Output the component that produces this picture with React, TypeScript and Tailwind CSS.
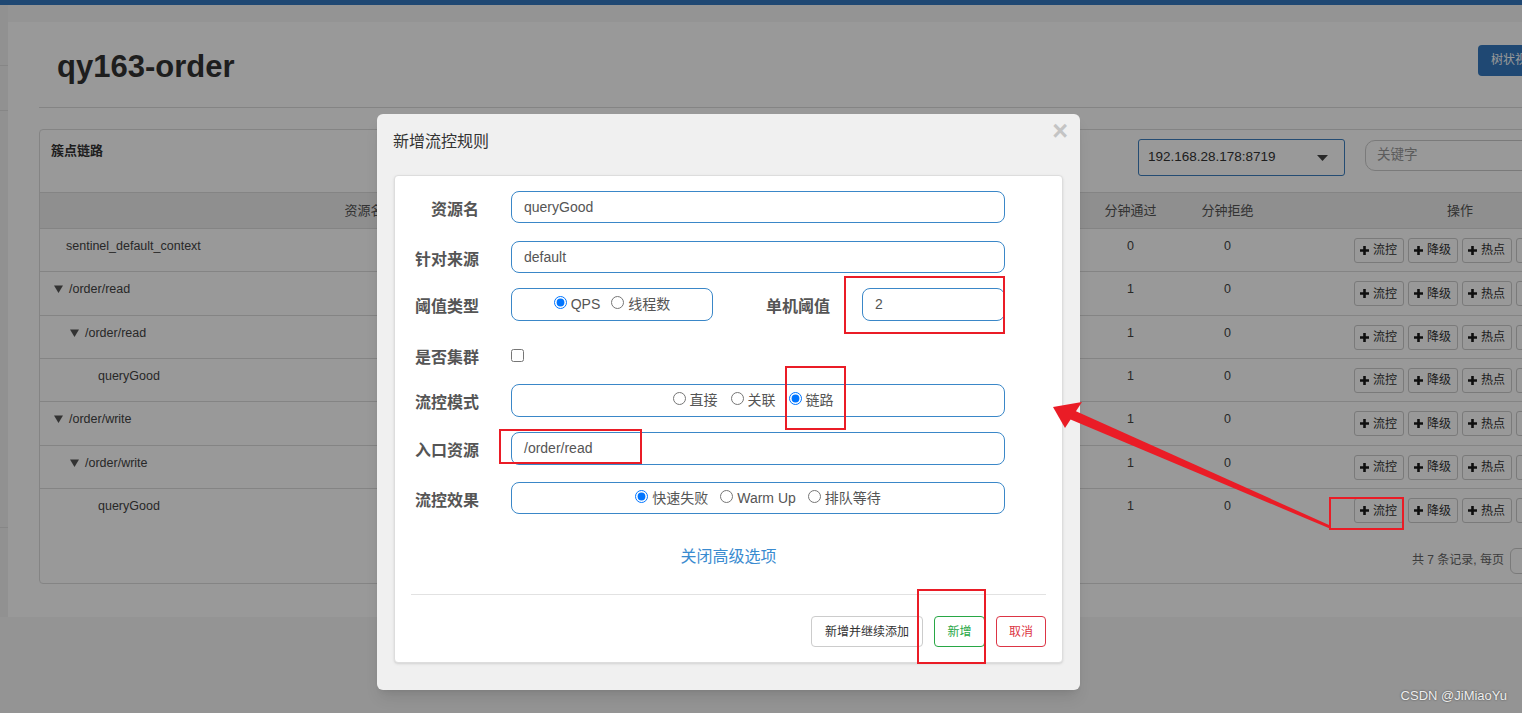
import React from 'react';

type Row = { name: string; level: number; tree: boolean; pass: string; h: string; last?: boolean };

const rows: Row[] = [
  { name: 'sentinel_default_context', level: 0, tree: false, pass: '0', h: 'h-[43px]' },
  { name: '/order/read', level: 0, tree: true, pass: '1', h: 'h-[44px]' },
  { name: '/order/read', level: 1, tree: true, pass: '1', h: 'h-[43px]' },
  { name: 'queryGood', level: 2, tree: false, pass: '1', h: 'h-[43px]' },
  { name: '/order/write', level: 0, tree: true, pass: '1', h: 'h-[44px]' },
  { name: '/order/write', level: 1, tree: true, pass: '1', h: 'h-[43px]' },
  { name: 'queryGood', level: 2, tree: false, pass: '1', h: 'h-[43px]', last: true },
];

const cols = 'grid grid-cols-[648px_98px_99px_98px_99px_97px_97px_368px]';

const Plus = () => (
  <svg width="9" height="9" viewBox="0 0 9 9" className="shrink-0">
    <path d="M3.2 0h2.6v3.2H9v2.6H5.8V9H3.2V5.8H0V3.2h3.2z" fill="#1a1a1a" />
  </svg>
);

const TreeCaret = () => (
  <svg width="9" height="8" viewBox="0 0 9 8" className="mt-[5px] shrink-0">
    <path d="M0 0.5h9L4.5 8z" fill="#555" />
  </svg>
);

function OpButton({ label }: { label: string }) {
  return (
    <div className="flex h-[25px] w-[50px] items-center gap-[4px] rounded-[3px] border border-[#ccc] bg-white pl-[5px] text-[12px] leading-none text-[#333]">
      <Plus />
      <span>{label}</span>
    </div>
  );
}

function Radio({ label, checked }: { label: string; checked?: boolean }) {
  return (
    <label className="flex items-center gap-[4px] whitespace-nowrap">
      <input type="radio" checked={!!checked} readOnly className="m-0 mb-[4px] h-[13px] w-[13px] shrink-0" />
      <span>{label}</span>
    </label>
  );
}

const box = 'flex items-center rounded-[8px] border border-[#3a87c8] text-[14px] text-[#555]';
const label = 'w-[68px] shrink-0 pt-[5px] text-right text-[16px] font-bold text-[#555]';

function PageBehind() {
  return (
    <>
      <div className="h-[5px] bg-[#3479c0]" />
      <div className="flex">
        <aside className="w-[8px] shrink-0 bg-[#f2f2f2]">
          <div className="h-[61px] border-b border-[#e0e0e0]" />
          <div className="h-[45px] border-b border-[#e0e0e0]" />
          <div className="h-[417px] border-b border-[#e0e0e0]" />
        </aside>
        <main className="pt-[17px]">
          <section className="h-[595px] w-[1700px] bg-white pl-[31px]">
            <header className="flex h-[86px] border-b border-[#ddd]">
              <div className="w-[1439px] pl-[18px] pt-[27px]">
                <h1 className="text-[31px] font-bold leading-[36px] text-[#333]">qy163-order</h1>
              </div>
              <div className="mt-[23px] h-[31px] w-[90px] rounded-[4px] bg-[#3479c0] pl-[13px] text-[12px] leading-[31px] text-white">
                树状视图
              </div>
            </header>

            <div className="mt-[21px] h-[455px] w-[1606px] rounded-[4px] border border-[#ddd]">
              <div className="flex h-[63px] border-b border-[#ddd] pl-[11px]">
                <div className="w-[1087px] pt-[11px] text-[13px] font-bold leading-[20px] text-[#333]">簇点链路</div>
                <div className="mt-[9px] flex h-[37px] w-[207px] items-center rounded-[3px] border border-[#3c7fc0] pl-[9px] text-[13.5px] text-[#333]">
                  192.168.28.178:8719
                  <svg width="11" height="6" viewBox="0 0 11 6" className="ml-auto mr-[16px]">
                    <path d="M0 0h11L5.5 6z" fill="#444" />
                  </svg>
                </div>
                <div className="ml-[20px] mt-[10px] flex h-[31px] w-[260px] items-center rounded-[10px] border border-[#ccc] pl-[11px] text-[13.5px] text-[#999]">
                  关键字
                </div>
              </div>

              <div className={`${cols} h-[36px] items-center border-b border-[#ddd] bg-[#eee] text-center text-[13px] text-[#555]`}>
                <div>资源名</div>
                <div>通过QPS</div>
                <div>拒绝QPS</div>
                <div>并发数</div>
                <div>平均RT</div>
                <div>分钟通过</div>
                <div>分钟拒绝</div>
                <div>操作</div>
              </div>

              {rows.map((r, i) => (
                <div
                  key={i}
                  className={`${cols} ${r.h} ${r.last ? '' : 'border-b border-[#ddd]'} text-[12.5px] leading-[18px] text-[#444]`}
                >
                  <div
                    className={`flex gap-[6px] pt-[8px] ${
                      r.tree ? (r.level === 0 ? 'pl-[14px]' : 'pl-[30px]') : r.level === 0 ? 'pl-[26px]' : 'pl-[58px]'
                    }`}
                  >
                    {r.tree && <TreeCaret />}
                    <span>{r.name}</span>
                  </div>
                  {/* QPS / RT columns sit under the dialog */}
                  <div />
                  <div />
                  <div />
                  <div />
                  <div className="pt-[8px] text-center">{r.pass}</div>
                  <div className="pt-[8px] text-center">0</div>
                  <div className="flex items-center justify-center gap-[4px]">
                    <OpButton label="流控" />
                    <OpButton label="降级" />
                    <OpButton label="热点" />
                    <OpButton label="授权" />
                  </div>
                </div>
              ))}

              <div className="flex h-[51px] items-start pl-[1372px]">
                <span className="pt-[19px] text-[12px] leading-[18px] text-[#666]">共 7 条记录, 每页</span>
                <div className="ml-[6px] mt-[16px] h-[26px] w-[60px] rounded-[6px] border border-[#ccc]" />
              </div>
            </div>
          </section>
        </main>
      </div>
    </>
  );
}

function Dialog() {
  return (
    <div className="absolute left-[377px] top-[114px] h-[576px] w-[703px] rounded-[6px] bg-[#f0f0f0] shadow-lg">
      <div className="flex h-[61px] justify-between pl-[16px] pr-[12px]">
        <h3 className="pt-[17px] text-[16px] leading-[22px] text-[#333]">新增流控规则</h3>
        <span className="mt-[4px] text-[27px] font-bold leading-[27px] text-[#c4c4c4]">×</span>
      </div>

      <div className="mx-[17px] h-[488px] rounded-[4px] border border-[#ddd] bg-white px-[16px] pt-[15px] shadow-sm">
        <div className="flex h-[32px] items-center">
          <div className={label}>资源名</div>
          <div className={`${box} ml-[32px] h-[32px] w-[494px] pl-[12px]`}>queryGood</div>
        </div>

        <div className="mt-[18px] flex h-[32px] items-center">
          <div className={label}>针对来源</div>
          <div className={`${box} ml-[32px] h-[32px] w-[494px] pl-[12px]`}>default</div>
        </div>

        <div className="mt-[15px] flex h-[33px] items-center">
          <div className={label}>阈值类型</div>
          <div className={`${box} ml-[32px] h-[33px] w-[202px] justify-center gap-[11px]`}>
            <Radio label="QPS" checked />
            <Radio label="线程数" />
          </div>
          <div className="w-[117px] pt-[5px] text-right text-[16px] font-bold text-[#555]">单机阈值</div>
          <div className={`${box} ml-[32px] h-[33px] w-[143px] pl-[12px]`}>2</div>
        </div>

        <div className="mt-[17px] flex h-[34px] items-center">
          <div className={label}>是否集群</div>
          <input type="checkbox" readOnly className="m-0 ml-[32px] h-[13px] w-[13px]" />
        </div>

        <div className="mt-[12px] flex h-[33px] items-center">
          <div className={label}>流控模式</div>
          <div className={`${box} ml-[32px] h-[33px] w-[494px] justify-center gap-[13px] pr-[10px]`}>
            <Radio label="直接" />
            <Radio label="关联" />
            <Radio label="链路" checked />
          </div>
        </div>

        <div className="mt-[15px] flex h-[33px] items-center">
          <div className={label}>入口资源</div>
          <div className={`${box} ml-[32px] h-[33px] w-[494px] pl-[12px]`}>/order/read</div>
        </div>

        <div className="mt-[17px] flex h-[32px] items-center">
          <div className={label}>流控效果</div>
          <div className={`${box} ml-[32px] h-[32px] w-[494px] justify-center gap-[12px]`}>
            <Radio label="快速失败" checked />
            <Radio label="Warm Up" />
            <Radio label="排队等待" />
          </div>
        </div>

        <div className="mt-[32px] text-center text-[16px] leading-[22px] text-[#3a8bd0]">关闭高级选项</div>

        <div className="mt-[26px] border-t border-[#e2e2e2]" />

        <div className="mt-[21px] flex justify-end gap-[11px] text-[12px]">
          <div className="flex h-[31px] w-[112px] items-center justify-center rounded-[4px] border border-[#ccc] text-[#333]">新增并继续添加</div>
          <div className="flex h-[31px] w-[51px] items-center justify-center rounded-[4px] border border-[#28a745] text-[#28a745]">新增</div>
          <div className="flex h-[31px] w-[50px] items-center justify-center rounded-[4px] border border-[#dc3545] text-[#dc3545]">取消</div>
        </div>
      </div>
    </div>
  );
}

export default function App() {
  return (
    <div className="relative h-[713px] w-[1522px] overflow-hidden bg-[#f7f7f7] font-[family-name:'Liberation_Sans','Noto_Sans_CJK_SC',sans-serif] text-[#333]">
      <PageBehind />
      <div className="absolute inset-0 bg-black/40" />
      <Dialog />

      {/* annotations */}
      <svg className="pointer-events-none absolute inset-0" width="1522" height="713">
        <g fill="none" stroke="#ea1c26" strokeWidth="2">
          <rect x="845" y="277" width="159" height="56" />
          <rect x="786" y="367" width="59" height="62" />
          <rect x="500" y="430" width="141" height="33" />
          <rect x="918" y="590" width="67" height="73" />
          <rect x="1330" y="498" width="73" height="31" />
        </g>
        <polygon points="1331,529 1329,525 1071,409 1067,418" fill="#ea1c26" />
        <polygon points="1053,407 1082,402 1065,428" fill="#ea1c26" />
      </svg>

      <div className="absolute bottom-[8px] right-[15px] text-[13px] text-[#eee] [text-shadow:0_0_2px_rgba(0,0,0,0.6)]">
        CSDN @JiMiaoYu
      </div>
    </div>
  );
}
